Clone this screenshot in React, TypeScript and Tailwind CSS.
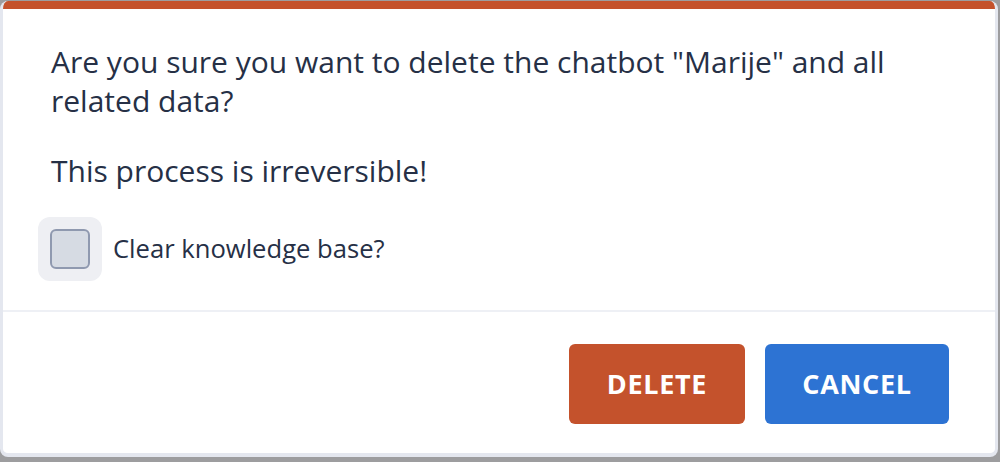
export default function App() {
  return (
    <div className="h-[462px] w-[1000px] overflow-hidden bg-[#9d9d9f] pt-px" style={{ fontFamily: '"Open Sans", "Noto Sans", sans-serif' }}>
      <div className="flex h-[456px] w-[998px] flex-col overflow-hidden rounded-lg border-x-[3px] border-b-4 border-[#e4e7ef] bg-white">
        <div className="h-2 shrink-0 bg-[#c4522c]" />

        <div className="px-12 pt-[33px] pb-[29px] text-[#263046]">
          <p className="text-[30px] leading-[39px]">
            Are you sure you want to delete the chatbot "Marije" and all related data?
          </p>
          <p className="mt-[31px] text-[30px] leading-[39px]">This process is irreversible!</p>

          <label className="mt-[27px] flex items-center gap-[11px] -ml-[13px]">
            <span className="flex h-16 w-16 items-center justify-center rounded-xl bg-[#eeeff3]">
              <span className="h-10 w-10 rounded-md border-2 border-[#8f99af] bg-[#d6dbe3]" />
            </span>
            <span className="text-[25.6px] text-[#263046]">Clear knowledge base?</span>
          </label>
        </div>

        <div className="h-0.5 shrink-0 bg-[#eef0f5]" />

        <div className="flex flex-1 items-start justify-end gap-5 pt-[32px] pr-[46px]">
          <button className="h-20 w-[176px] rounded-md bg-[#c4522c] text-[27px] font-bold tracking-wide text-white">
            DELETE
          </button>
          <button className="h-20 w-[184px] rounded-md bg-[#2d73d3] text-[27px] font-bold tracking-wide text-white">
            CANCEL
          </button>
        </div>
      </div>
      <div className="-mt-[1px] pl-[152px] text-[30px] leading-[38px] text-[#2a2d3a]">Marije</div>
    </div>
  )
}
